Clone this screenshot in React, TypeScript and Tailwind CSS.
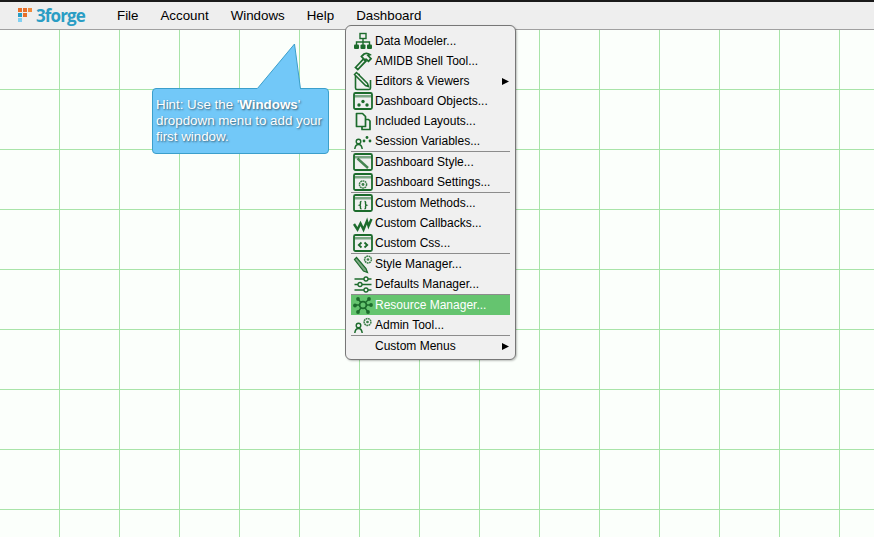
import React from 'react';

type IconName =
  | 'modeler' | 'hammer' | 'editors' | 'objects' | 'layouts' | 'session'
  | 'style' | 'settings' | 'methods' | 'callbacks' | 'css'
  | 'styleManager' | 'defaults' | 'resource' | 'admin';

type MenuEntry = { label: string; icon?: IconName; submenu?: boolean; active?: boolean } | 'sep';

const menuEntries: MenuEntry[] = [
  { label: 'Data Modeler...', icon: 'modeler' },
  { label: 'AMIDB Shell Tool...', icon: 'hammer' },
  { label: 'Editors & Viewers', icon: 'editors', submenu: true },
  { label: 'Dashboard Objects...', icon: 'objects' },
  { label: 'Included Layouts...', icon: 'layouts' },
  { label: 'Session Variables...', icon: 'session' },
  'sep',
  { label: 'Dashboard Style...', icon: 'style' },
  { label: 'Dashboard Settings...', icon: 'settings' },
  'sep',
  { label: 'Custom Methods...', icon: 'methods' },
  { label: 'Custom Callbacks...', icon: 'callbacks' },
  { label: 'Custom Css...', icon: 'css' },
  'sep',
  { label: 'Style Manager...', icon: 'styleManager' },
  { label: 'Defaults Manager...', icon: 'defaults' },
  'sep',
  { label: 'Resource Manager...', icon: 'resource', active: true },
  { label: 'Admin Tool...', icon: 'admin' },
  'sep',
  { label: 'Custom Menus', submenu: true },
];

const GREEN = '#1c6b2c';

// window frame shared by the dashboard / custom icons
const WindowFrame = () => (
  <>
    <rect x="1" y="2" width="18" height="16" rx="1.5" fill="none" stroke={GREEN} strokeWidth="1.8" />
    <rect x="1" y="4" width="18" height="2.500" fill={GREEN} opacity="0.55" />
  </>
);

const Gear = ({ cx, cy, r }: { cx: number; cy: number; r: number }) => (
  <>
    <circle cx={cx} cy={cy} r={r} fill="none" stroke={GREEN} strokeWidth="1.500" strokeDasharray="1.8 0.5" opacity="0.85" />
    <circle cx={cx} cy={cy} r={r * 0.4} fill={GREEN} opacity="0.85" />
  </>
);

const Person = () => (
  <>
    <circle cx="5.500" cy="10.500" r="2.300" fill="none" stroke={GREEN} strokeWidth="1.400" />
    <path d="M1.800 18c.3-3 1.800-4.600 3.700-4.600s3.400 1.600 3.700 4.600" fill="none" stroke={GREEN} strokeWidth="1.500" />
  </>
);

const MenuIcon = ({ name }: { name: IconName }) => {
  const content = () => {
    switch (name) {
      case 'modeler':
        return (
          <>
            <rect x="7" y="2.500" width="6" height="5" fill="none" stroke={GREEN} strokeWidth="1.400" />
            <path d="M10 7.500V11M3.500 14v-3h13v3M10 11v3" fill="none" stroke={GREEN} strokeWidth="1.400" />
            <rect x="1" y="13.500" width="5" height="4.500" rx="1" fill={GREEN} />
            <rect x="7.500" y="13.500" width="5" height="4.500" rx="1" fill={GREEN} />
            <rect x="14" y="13.500" width="5" height="4.500" rx="1" fill={GREEN} />
          </>
        );
      case 'hammer':
        return (
          <>
            <path d="M2.500 16.500 10.500 8l2.300 2.200-8 8.300z" fill="none" stroke={GREEN} strokeWidth="1.800" />
            <path d="M8.500 5.500 11 3c2.200-1 4.200-.6 6 .8l-2 .7 3 3.200-2.500 2.600-2.500-2-1 1z" fill="none" stroke={GREEN} strokeWidth="1.800" />
          </>
        );
      case 'editors':
        return (
          <>
            <path d="M7 3.500H4A1.500 1.500 0 0 0 2.500 5v12A1.500 1.500 0 0 0 4 18.500h12a1.500 1.500 0 0 0 1.500-1.500V9" fill="none" stroke={GREEN} strokeWidth="1.600" />
            <path d="M1.500 3.500 3.500 1.500 14.500 12.500 15.500 15.500 12.500 14.500z" fill="#f0f0f0" stroke={GREEN} strokeWidth="1.500" />
          </>
        );
      case 'objects':
        return (
          <>
            <WindowFrame />
            <circle cx="6" cy="14" r="1.700" fill={GREEN} />
            <circle cx="10" cy="10.500" r="1.700" fill={GREEN} />
            <circle cx="14" cy="14" r="1.700" fill={GREEN} />
          </>
        );
      case 'layouts':
        return (
          <>
            <path d="M3.500 2.500h6l3 3v10h-9z" fill="none" stroke={GREEN} strokeWidth="1.700" strokeLinejoin="round" />
            <path d="M12 8.500h3.500l1.500 1.500v8.500H9V15.500" fill="none" stroke={GREEN} strokeWidth="1.700" strokeLinejoin="round" />
          </>
        );
      case 'session':
        return (
          <>
            <Person />
            <circle cx="11" cy="10" r="1.400" fill={GREEN} />
            <circle cx="14" cy="6.500" r="1.400" fill={GREEN} />
            <circle cx="17" cy="10" r="1.400" fill={GREEN} />
          </>
        );
      case 'style':
        return (
          <>
            <WindowFrame />
            <path d="M4.500 6.500 15 16" stroke={GREEN} strokeWidth="2.400" opacity="0.8" />
          </>
        );
      case 'settings':
        return (
          <>
            <WindowFrame />
            <Gear cx={10} cy={12.500} r={3.600} />
          </>
        );
      case 'methods':
        return (
          <>
            <WindowFrame />
            <path d="M8.500 8.500c-1.500 0-1 1.500-1 2.500s-.5 1-1 1.200c.5.200 1 .3 1 1.200s-.5 2.300 1 2.300M11.500 8.500c1.500 0 1 1.500 1 2.500s.5 1 1 1.200c-.5.200-1 .3-1 1.200s.5 2.300-1 2.300" fill="none" stroke={GREEN} strokeWidth="1.400" />
          </>
        );
      case 'callbacks':
        return <path d="M1 11 4.500 16.500 7.500 10.500 10.500 16.500 14 8 15.500 13 18.500 6" fill="none" stroke={GREEN} strokeWidth="2.400" />;
      case 'css':
        return (
          <>
            <WindowFrame />
            <path d="M8.500 9.500 5.800 12l2.700 2.500M11.500 9.500l2.700 2.500-2.700 2.500" fill="none" stroke={GREEN} strokeWidth="1.800" />
          </>
        );
      case 'styleManager':
        return (
          <>
            <path d="M1.500 5.500 3.500 3.500 13 14.500l1.500 4-4-1.500z" fill="#7fa886" stroke={GREEN} strokeWidth="1.200" />
            <Gear cx={15} cy={5.500} r={3.400} />
          </>
        );
      case 'defaults':
        return (
          <>
            <path d="M1.500 5h17M1.500 10.500h17M1.500 16h17" stroke={GREEN} strokeWidth="1.300" />
            <circle cx="13" cy="5" r="2" fill="#f0f0f0" stroke={GREEN} strokeWidth="1.300" />
            <circle cx="7" cy="10.500" r="2" fill="#f0f0f0" stroke={GREEN} strokeWidth="1.300" />
            <circle cx="13" cy="16" r="2" fill="#f0f0f0" stroke={GREEN} strokeWidth="1.300" />
          </>
        );
      case 'resource':
        return (
          <>
            <path d="M10 10 5 4M10 10 16 4M10 10H2M10 10H18M10 10 5 17M10 10 15 17" stroke={GREEN} strokeWidth="1.300" />
            <circle cx="10" cy="10" r="3.400" fill="#65c46f" stroke={GREEN} strokeWidth="1.800" />
            <circle cx="5" cy="4" r="1.900" fill={GREEN} />
            <circle cx="16" cy="4" r="1.900" fill={GREEN} />
            <circle cx="2" cy="10.500" r="1.900" fill={GREEN} />
            <circle cx="18" cy="10" r="1.900" fill={GREEN} />
            <circle cx="5" cy="17" r="1.900" fill={GREEN} />
            <circle cx="15" cy="17" r="1.900" fill={GREEN} />
          </>
        );
      case 'admin':
        return (
          <>
            <Person />
            <Gear cx={14.500} cy={7} r={3.400} />
          </>
        );
    }
  };

  return (
    <svg width="20" height="20" viewBox="0 0 20 20" className="shrink-0">
      {content()}
    </svg>
  );
};

const Logo = () => (
  <div className="flex items-center gap-[3px]">
    <svg width="15" height="15" viewBox="0 0 15 15">
      <rect x="0" y="0" width="4" height="4" fill="#e8702a" />
      <rect x="5" y="0" width="4" height="4" fill="#e8702a" />
      <rect x="10" y="0" width="4" height="4" fill="#f08a3c" />
      <rect x="0" y="5" width="4" height="4" fill="#2a9dc4" />
      <rect x="5" y="5" width="4" height="4" fill="#e8702a" />
      <rect x="0" y="10" width="4" height="4" fill="#7fd0f2" />
    </svg>
    <span className="font-['Open_Sans',sans-serif] text-[17px] font-bold leading-none tracking-[-0.9px] text-[#2a9dc4]">
      3forge
    </span>
  </div>
);

const navItems = ['File', 'Account', 'Windows', 'Help', 'Dashboard'];

export default function App() {
  return (
    <div className="relative flex h-[537px] w-[874px] flex-col overflow-hidden font-['Liberation_Sans',Arial,sans-serif]">
      {/* Top bar */}
      <div className="flex h-[30px] shrink-0 items-center border-t-2 border-b border-t-[#1a1a1a] border-b-[#a0a0a0] bg-[#eeeeee]">
        <div className="ml-[18px] w-[88px]">
          <Logo />
        </div>
        {navItems.map((item) => (
          <span key={item} className="px-[11px] text-[13.33px] text-black">
            {item}
          </span>
        ))}
      </div>

      {/* Grid canvas */}
      <div className="flex-1 bg-[#fbfffb] bg-[linear-gradient(to_right,#a8e4a8_1px,transparent_1px),linear-gradient(to_bottom,#a8e4a8_1px,transparent_1px)] bg-[size:60px_60px] bg-[position:59px_59px]" />

      {/* Hint bubble */}
      <div className="absolute left-[152px] top-[88px] h-[66px] w-[177px] rounded-[4px] border border-[#3b9fcb] bg-[#72c8f8] px-[3px] py-[2px] text-[13.33px] leading-[16px] text-white [text-shadow:1px_1px_2px_rgba(0,0,0,0.55)]">
        <svg width="50" height="48" viewBox="0 0 50 48" className="absolute left-[103px] top-[-46px]">
          <path d="M1 46 38.500 1 44.500 46" fill="#72c8f8" stroke="#3b9fcb" strokeWidth="1" />
          <rect x="1.500" y="45" width="42.500" height="3" fill="#72c8f8" />
        </svg>
        <div className="relative mt-[6px]">
          Hint: Use the '<b>Windows</b>' dropdown menu to add your first window.
        </div>
      </div>

      {/* Dashboard dropdown */}
      <div className="absolute left-[345px] top-[25px] w-[171px] rounded-[6px] border border-[#777777] bg-[#f0f0f0] px-[5px] pb-[3px] pt-[5px] shadow-[1px_1px_2px_rgba(0,0,0,0.25)]">
        {menuEntries.map((entry, i) =>
          entry === 'sep' ? (
            <div key={i} className="h-px bg-[#8c8c8c]" />
          ) : (
            <div
              key={entry.label}
              className={`flex h-[20px] items-center pl-[2px] text-[12px] ${
                entry.active ? 'bg-[#65c46f] text-white' : 'text-black'
              }`}
            >
              {entry.icon ? <MenuIcon name={entry.icon} /> : <span className="w-[20px] shrink-0" />}
              <span className="ml-[2px] flex-1 whitespace-nowrap">{entry.label}</span>
              {entry.submenu && (
                <svg width="7" height="7" viewBox="0 0 7 7" className="mr-[1px]">
                  <path d="M0 0 7 3.500 0 7z" fill="#000" />
                </svg>
              )}
            </div>
          ),
        )}
      </div>
    </div>
  );
}
